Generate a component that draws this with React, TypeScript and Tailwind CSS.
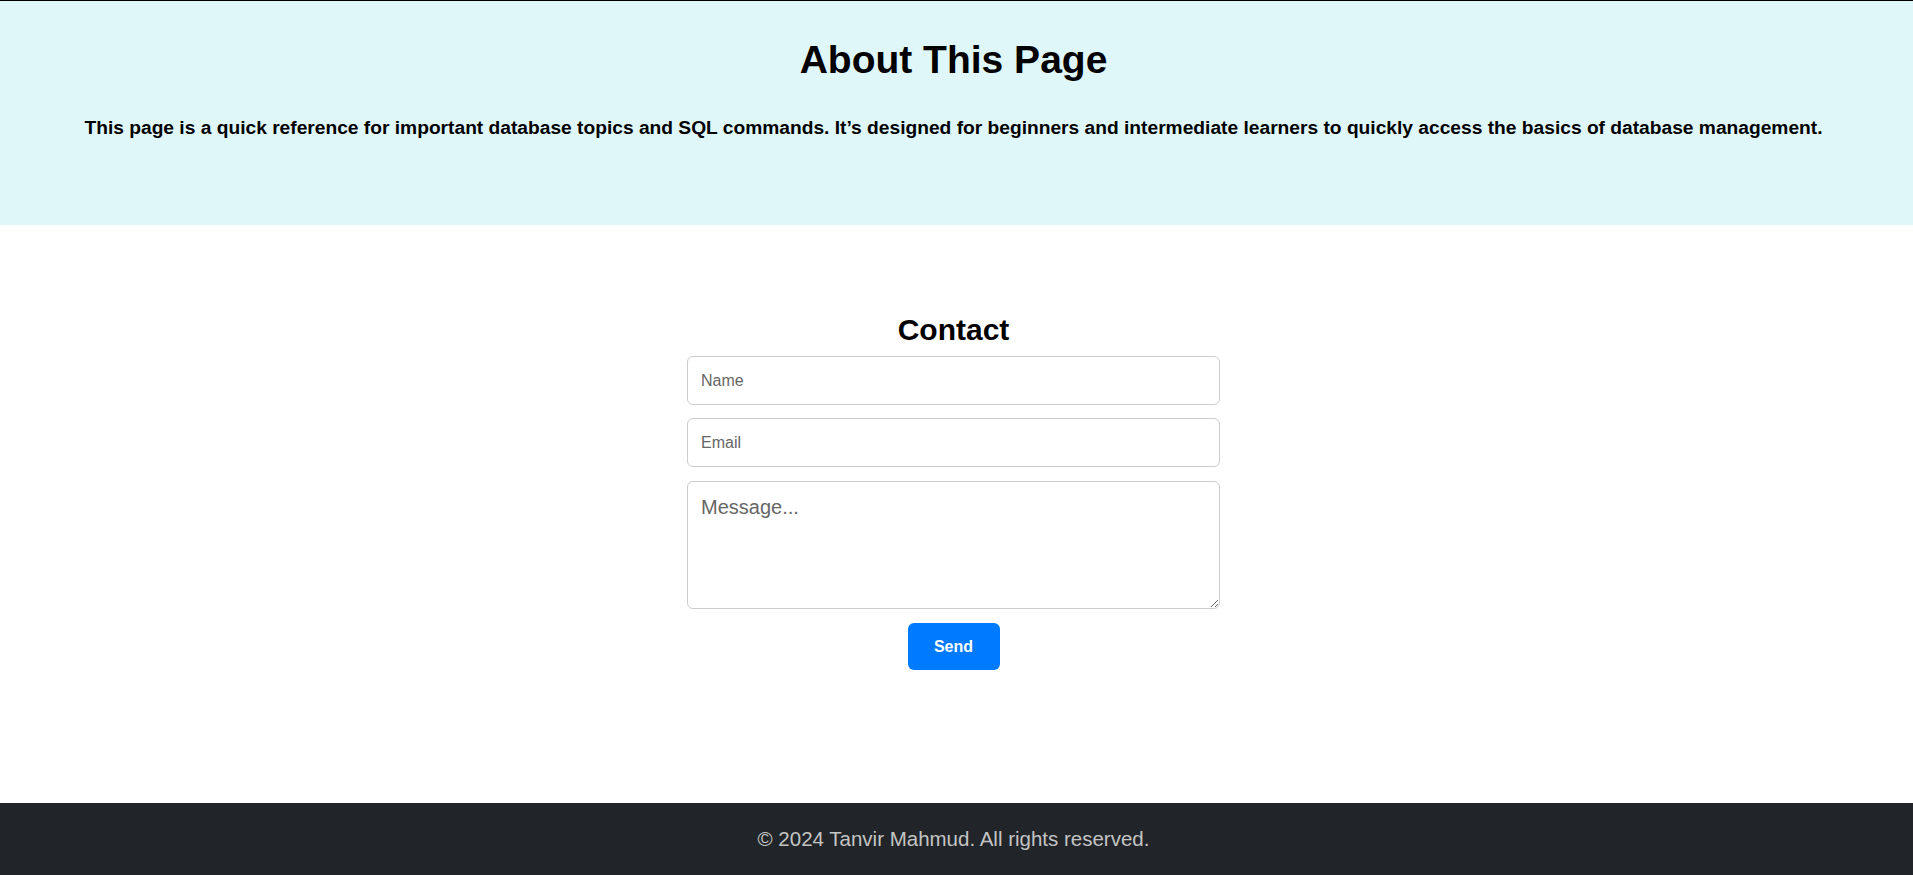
import {FC} from "react";

const font = {fontFamily: '"Liberation Sans", Arial, sans-serif'};

const About: FC = () => {
    return (
        <section className="w-full bg-[#e0f7fa] border-t border-black">
            <div className="pr-[6px] pt-[35px] pb-[83px] text-center text-black">
                <h1 className="text-[39px] leading-[48px] font-bold">About This Page</h1>
                <p className="mt-[30px] text-[19.2px] leading-[28px] font-bold">
                    This page is a quick reference for important database topics and SQL commands. It’s designed for
                    beginners and intermediate learners to quickly access the basics of database management.
                </p>
            </div>
        </section>
    );
};

const Contact: FC = () => {
    return (
        <section className="w-full pt-[87px] pb-[133px]">
            <div className="pr-[6px] flex flex-col items-center">
                <h2 className="text-[30px] leading-[36px] font-bold text-black">Contact</h2>
                <form className="mt-[8px] w-[533px] flex flex-col items-center gap-[13px]">
                    <input
                        type="text"
                        placeholder="Name"
                        className="w-full h-[49px] px-[13px] text-[16px] border border-[#cccccc] rounded-[6px] outline-none placeholder:text-[#666666]"
                        style={font}
                    />
                    <input
                        type="email"
                        placeholder="Email"
                        className="w-full h-[49px] px-[13px] text-[16px] border border-[#cccccc] rounded-[6px] outline-none placeholder:text-[#666666]"
                        style={font}
                    />
                    <textarea
                        placeholder="Message..."
                        className="mt-[1px] w-full h-[128px] px-[13px] py-[10px] text-[20px] border border-[#cccccc] rounded-[6px] outline-none placeholder:text-[#666666]"
                        style={font}
                    ></textarea>
                    <button
                        type="button"
                        className="mt-[1px] w-[92px] h-[47px] bg-[#007bff] text-white text-[16px] font-bold rounded-[6px]"
                        style={font}
                    >
                        Send
                    </button>
                </form>
            </div>
        </section>
    );
};

const Footer: FC = () => {
    return (
        <footer className="w-full bg-[#212529] h-[72px] flex items-center">
            <p className="w-full pr-[6px] text-center text-[20.5px] text-[#c4c4c4]">
                © 2024 Tanvir Mahmud. All rights reserved.
            </p>
        </footer>
    );
};

export default function App() {
    return (
        <div className="min-h-screen bg-white" style={font}>
            <About/>
            <Contact/>
            <Footer/>
        </div>
    );
}
